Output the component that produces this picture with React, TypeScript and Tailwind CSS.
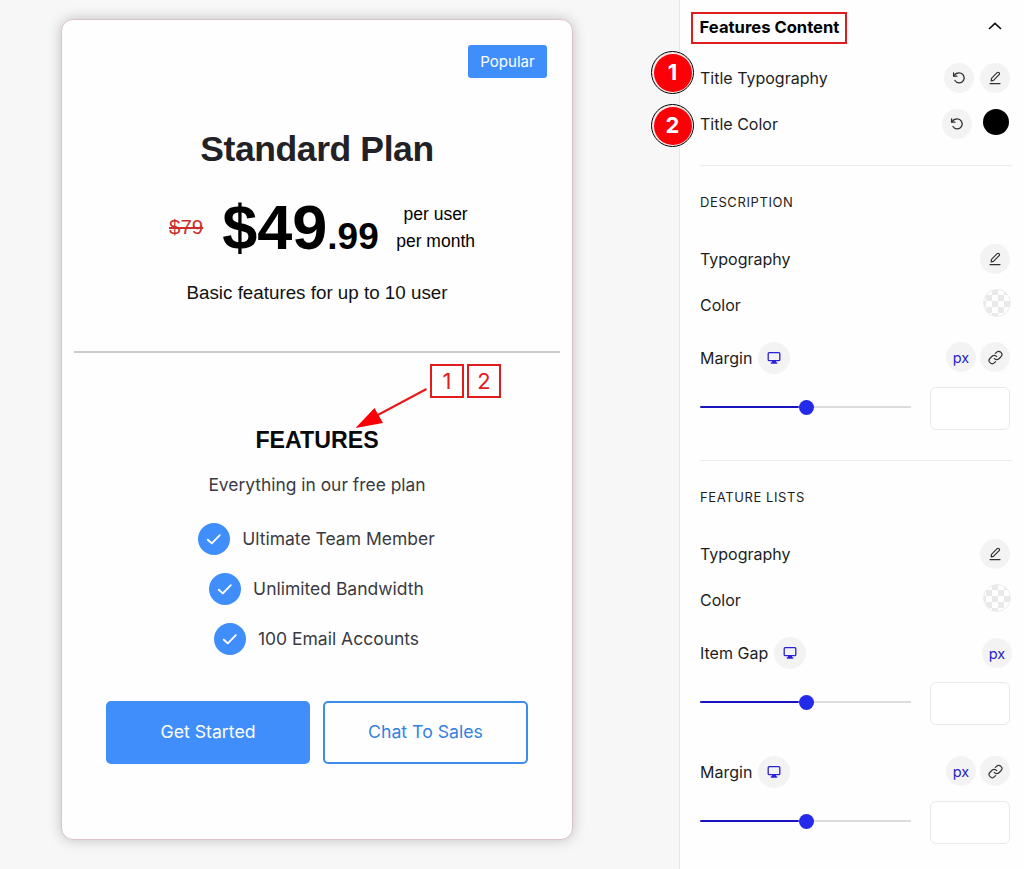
import React from 'react';

const features = ['Ultimate Team Member', 'Unlimited Bandwidth', '100 Email Accounts'];

const UndoIcon = () => (
  <svg width="14" height="14" viewBox="0 0 14 14" fill="none" stroke="#333" strokeWidth="1.3" strokeLinecap="round" strokeLinejoin="round">
    <path d="M1.6 1.8v3.4H5" />
    <path d="M1.9 5C3 2.9 5 1.9 7.2 1.9a5 5 0 1 1-4.3 7.6" />
  </svg>
);

const EditIcon = () => (
  <svg width="14" height="14" viewBox="0 0 14 14" fill="none" stroke="#333" strokeWidth="1.2" strokeLinecap="round" strokeLinejoin="round">
    <path d="M3.2 9.9l.3-2.5 5.6-5.7a1.3 1.3 0 0 1 1.9 0l.1.1a1.3 1.3 0 0 1 0 1.9L5.5 9.4z" />
    <path d="M2 12.6h10" />
  </svg>
);

const LinkIcon = () => (
  <svg width="15" height="15" viewBox="0 0 24 24" fill="none" stroke="#333" strokeWidth="1.9" strokeLinecap="round" strokeLinejoin="round">
    <path d="M10 13.5a5 5 0 0 0 7.5.5l3.2-3.2a5 5 0 0 0-7.1-7.1L11.8 5.5" />
    <path d="M14 10.5a5 5 0 0 0-7.5-.5l-3.2 3.2a5 5 0 0 0 7.1 7.1l1.8-1.8" />
  </svg>
);

const MonitorIcon = () => (
  <svg width="14" height="14" viewBox="0 0 14 14">
    <rect x="1.2" y="1.7" width="11.6" height="8" rx="1" fill="none" stroke="#2a22d6" strokeWidth="1.3" />
    <path d="M5 9.7h4v1.5h1.2v1.6H3.8v-1.6H5z" fill="#2a22d6" />
  </svg>
);

const IconButton: React.FC<{ children: React.ReactNode }> = ({ children }) => (
  <button className="w-[30px] h-[30px] shrink-0 rounded-full bg-[#f3f3f3] flex items-center justify-center">{children}</button>
);

const DeviceButton = () => (
  <button className="w-8 h-8 ml-[6px] rounded-full bg-[#f3f3f3] flex items-center justify-center">
    <MonitorIcon />
  </button>
);

const PxButton = () => (
  <button className="w-[30px] h-[30px] rounded-full bg-[#f3f3f3] flex items-center justify-center pt-px text-[14.5px] text-[#2a1fc8]">px</button>
);

const EmptySwatch = () => (
  <button className="w-7 h-7 mb-[7px] rounded-full border border-[#ececec] bg-white bg-[conic-gradient(#e9e9e9_25%,transparent_0_50%,#e9e9e9_0_75%,transparent_0)] bg-[length:12px_12px] bg-[position:2px_-1px]" />
);

const SliderRow = () => (
  <div className="h-[46px] flex items-center">
    <div className="w-[211px] flex items-center">
      <div className="w-[99px] h-[2.5px] rounded-full bg-[#1a12c0]" />
      <div className="w-[15px] h-[15px] rounded-full bg-[#242aea]" />
      <div className="flex-1 h-[2px] bg-[#dcdcdc]" />
    </div>
    <div className="w-20 h-[43px] mt-[3px] ml-[19px] rounded-md border border-[#e9e9e9] bg-white" />
  </div>
);

const SectionTop: React.FC<{ title: string }> = ({ title }) => (
  <>
    <div className="h-[72px] pt-px flex items-center text-[13px] tracking-[0.6px]">{title}</div>
    <div className="h-[42px] flex items-center justify-between pr-[2px]">
      <span className="pb-px">Typography</span>
      <IconButton><EditIcon /></IconButton>
    </div>
    <div className="h-[52px] flex items-center justify-between pr-[1px]">
      <span className="pb-[2px]">Color</span>
      <EmptySwatch />
    </div>
  </>
);

const MarginRow = () => (
  <div className="h-[52px] flex items-center">
    <span>Margin</span>
    <DeviceButton />
    <div className="ml-auto flex gap-1 pr-[2px] pb-[2px]">
      <PxButton />
      <IconButton><LinkIcon /></IconButton>
    </div>
  </div>
);

const StepMarker: React.FC<{ n: number }> = ({ n }) => (
  <div className="w-[43px] h-[43px] rounded-full border border-black bg-[#ffe9e9] p-[1.5px]">
    <div className="w-full h-full rounded-full bg-[#fb0007] text-white text-[22px] font-bold flex items-center justify-center">{n}</div>
  </div>
);

const PricingCard = () => (
  <div className="relative ml-[61px] mt-[19px] w-[512px] h-[821px] rounded-[12px] border border-[#dcc4c6] bg-[#fefefe] shadow-[0_0_14px_rgba(0,0,0,0.22)] flex flex-col items-center">
    <div className="self-end mt-[25px] mr-[25px] w-[79px] h-[33px] rounded-[3px] bg-[#3f8efc] text-white text-[15px] pt-px flex items-center justify-center">Popular</div>

    <h2 className="mt-[49px] h-11 leading-[44px] font-['Liberation_Sans',sans-serif] font-bold text-[35.5px] tracking-[-0.4px] text-[#222226]">Standard Plan</h2>

    {/* Price */}
    <div className="mt-[30px] ml-[10px] h-16 w-[306px] flex font-['Liberation_Sans',sans-serif] text-black">
      <span className="mt-[14px] text-[20.5px] leading-6 text-[#c9302c] line-through">$79</span>
      <div className="ml-[19px] -mt-[6px] flex items-baseline font-bold leading-[64px] whitespace-nowrap">
        <span className="text-[63px]">$49</span>
        <span className="text-[37px]">.99</span>
      </div>
      <div className="ml-auto text-center text-[17.5px] leading-[26.5px] whitespace-nowrap">
        <p>per user</p>
        <p>per month</p>
      </div>
    </div>
    <p className="mt-[12px] h-8 leading-8 font-['Liberation_Sans',sans-serif] text-[18.8px] text-[#111]">Basic features for up to 10 user</p>

    <div className="mt-[42px] w-[486px] h-[2px] bg-[#cbcbcb]" />

    {/* Features */}
    <h3 className="mt-[71px] h-8 leading-8 font-['Liberation_Sans',sans-serif] font-bold text-[23.2px] text-[#0a0a0a]">FEATURES</h3>
    <p className="mt-[14px] h-[30px] leading-[30px] text-[17.4px] text-[#3a3a42]">Everything in our free plan</p>
    <ul className="mt-[14px] flex flex-col items-center">
      {features.map(item => (
        <li key={item} className="h-[50px] flex items-center gap-[13px] text-[17.5px] text-[#3a3a42]">
          <span className="w-8 h-8 rounded-full bg-[#3f8efc] flex items-center justify-center">
            <svg width="16" height="16" viewBox="0 0 16 16" fill="none" stroke="#fff" strokeWidth="1.9" strokeLinecap="round" strokeLinejoin="round">
              <path d="M1.8 8.7l4 3.7 8-8.2" />
            </svg>
          </span>
          <span className="-ml-px pr-px">{item}</span>
        </li>
      ))}
    </ul>

    <div className="mt-[37px] flex gap-[13px] text-[17.7px]">
      <button className="w-[204px] h-[63px] rounded-[5px] bg-[#3f8efc] text-white">Get Started</button>
      <button className="w-[205px] h-[63px] rounded-[5px] border-[2.5px] border-[#3d8cea] text-[#3482df]">Chat To Sales</button>
    </div>

    {/* Callout pointing at the features title */}
    <div className="absolute left-[368px] top-[344px] flex gap-[3px] text-[22px] text-[#e01c1c]">
      <span className="w-[34px] h-[34px] border-2 border-[#e01c1c] flex items-center justify-center">1</span>
      <span className="w-[34px] h-[34px] border-2 border-[#e01c1c] flex items-center justify-center">2</span>
    </div>
    <svg className="absolute left-[293px] top-[366px]" width="74" height="44" viewBox="0 0 74 44">
      <path d="M20 30.5L71.5 3" stroke="#e81818" strokeWidth="2" />
      <path d="M0.5 42L19.5 22l8.5 15z" fill="#fb0007" />
    </svg>
  </div>
);

const App: React.FC = () => {
  return (
    <div className="relative w-[1024px] h-[869px] overflow-hidden flex bg-[#f7f7f7] font-['Inter',sans-serif]">
      <div className="w-[679px] shrink-0">
        <PricingCard />
      </div>

      {/* Settings panel */}
      <div className="flex-1 border-l border-[#e6e6e6] bg-[#fefefe] pl-5 pr-3 text-[16px] text-[#1d1d1f]">
        <div className="h-[55px] flex items-center justify-between">
          <span className="-ml-[9px] w-[156px] h-[32px] border-2 border-[#e01c1c] flex items-center justify-center pl-px pb-px font-bold text-[16.6px] text-black whitespace-nowrap">Features Content</span>
          <svg className="mr-[10px] mb-[3px]" width="14" height="8" viewBox="0 0 14 8" fill="none" stroke="#111" strokeWidth="1.7">
            <path d="M1 7l6-5.7L13 7" />
          </svg>
        </div>
        <div className="h-[46px] flex items-center justify-between pr-[2px]">
          <span>Title Typography</span>
          <div className="flex gap-[6px]">
            <IconButton><UndoIcon /></IconButton>
            <IconButton><EditIcon /></IconButton>
          </div>
        </div>
        <div className="h-[47px] flex items-center justify-between pr-[3px]">
          <span className="pb-px">Title Color</span>
          <div className="flex gap-[11px] pb-px">
            <IconButton><UndoIcon /></IconButton>
            <button className="w-[26px] h-[26px] rounded-full bg-black" />
          </div>
        </div>

        <div className="mt-[17px] border-t border-[#ececec]">
          <SectionTop title="DESCRIPTION" />
          <MarginRow />
          <SliderRow />
        </div>

        <div className="mt-[30px] border-t border-[#ececec]">
          <SectionTop title="FEATURE LISTS" />
          <div className="h-[52px] flex items-center justify-between">
            <div className="flex items-center">
              <span>Item Gap</span>
              <DeviceButton />
            </div>
            <PxButton />
          </div>
          <SliderRow />
          <div className="h-[21px]" />
          <MarginRow />
          <SliderRow />
        </div>
      </div>

      <div className="absolute left-[651px] top-[51px] flex flex-col gap-[10px]">
        <StepMarker n={1} />
        <StepMarker n={2} />
      </div>
    </div>
  );
};

export default App;
